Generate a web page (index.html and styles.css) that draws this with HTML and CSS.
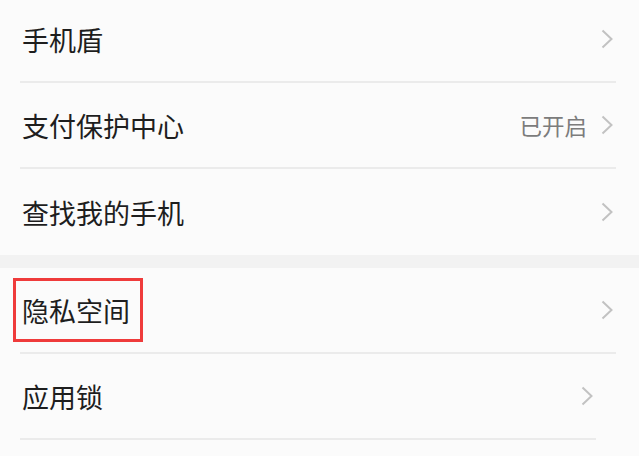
FILE: index.html
```html
<!DOCTYPE html>
<html lang="zh-CN">
<head>
  <meta charset="UTF-8" />
  <meta name="viewport" content="width=device-width, initial-scale=1.0" />
  <title>安全设置</title>
  <link rel="stylesheet" href="styles.css">
</head>
<body>
  <div class="settings">
    <section class="group group-first">
      <div class="row">
        <span class="label">手机盾</span>
        <span class="trail">
          <svg class="chev" viewBox="0 0 12 20"><polyline points="1.5,1.5 10.5,10 1.5,18.5" /></svg>
        </span>
      </div>
      <div class="row">
        <span class="label">支付保护中心</span>
        <span class="trail">
          <span class="status">已开启</span>
          <svg class="chev" viewBox="0 0 12 20"><polyline points="1.5,1.5 10.5,10 1.5,18.5" /></svg>
        </span>
      </div>
      <div class="row row-last">
        <span class="label">查找我的手机</span>
        <span class="trail">
          <svg class="chev" viewBox="0 0 12 20"><polyline points="1.5,1.5 10.5,10 1.5,18.5" /></svg>
        </span>
      </div>
    </section>

    <div class="spacer"></div>

    <section class="group">
      <div class="row">
        <span class="label marked">隐私空间</span>
        <span class="trail">
          <svg class="chev" viewBox="0 0 12 20"><polyline points="1.5,1.5 10.5,10 1.5,18.5" /></svg>
        </span>
      </div>
      <div class="row row-narrow">
        <span class="label">应用锁</span>
        <span class="trail">
          <svg class="chev" viewBox="0 0 12 20"><polyline points="1.5,1.5 10.5,10 1.5,18.5" /></svg>
        </span>
      </div>
    </section>
  </div>
</body>
</html>
```

FILE: styles.css
```css
:root {
  --page-bg: #fbfbfb;
  --band-bg: #f2f2f2;
  --divider: #ebebeb;
  --text-main: #1e1e1e;
  --text-muted: #7c7c7c;
  --chevron: #c2c2c2;
  --mark-red: #ef3b3b;
}

* {
  margin: 0;
  padding: 0;
  box-sizing: border-box;
}

html,
body {
  height: 100%;
}

body {
  background: var(--page-bg);
  font-family: "Noto Sans CJK SC", "Noto Sans", sans-serif;
  color: var(--text-main);
  overflow: hidden;
}

.settings {
  display: flex;
  flex-direction: column;
}

.group-first {
  margin-top: -3px;
}

.row {
  display: flex;
  align-items: center;
  justify-content: space-between;
  height: 86px;
  margin: 0 23px 0 20px;
  padding: 0 3px 0 2px;
  border-bottom: 2px solid var(--divider);
}

.row-last {
  border-bottom: none;
}

.row-narrow {
  margin-right: 43px;
}

.label {
  font-size: 27px;
  line-height: 1;
}

.marked {
  position: relative;
}

/* red annotation frame around the label */
.marked::after {
  content: "";
  position: absolute;
  left: -9px;
  right: -13px;
  top: -19px;
  bottom: -18px;
  border: 3px solid var(--mark-red);
}

.trail {
  display: flex;
  align-items: center;
  gap: 14px;
}

.status {
  font-size: 22.5px;
  line-height: 1;
  color: var(--text-muted);
}

.chev {
  width: 12px;
  height: 20px;
  fill: none;
  stroke: var(--chevron);
  stroke-width: 2;
}

.spacer {
  height: 13px;
  background: var(--band-bg);
}
```
